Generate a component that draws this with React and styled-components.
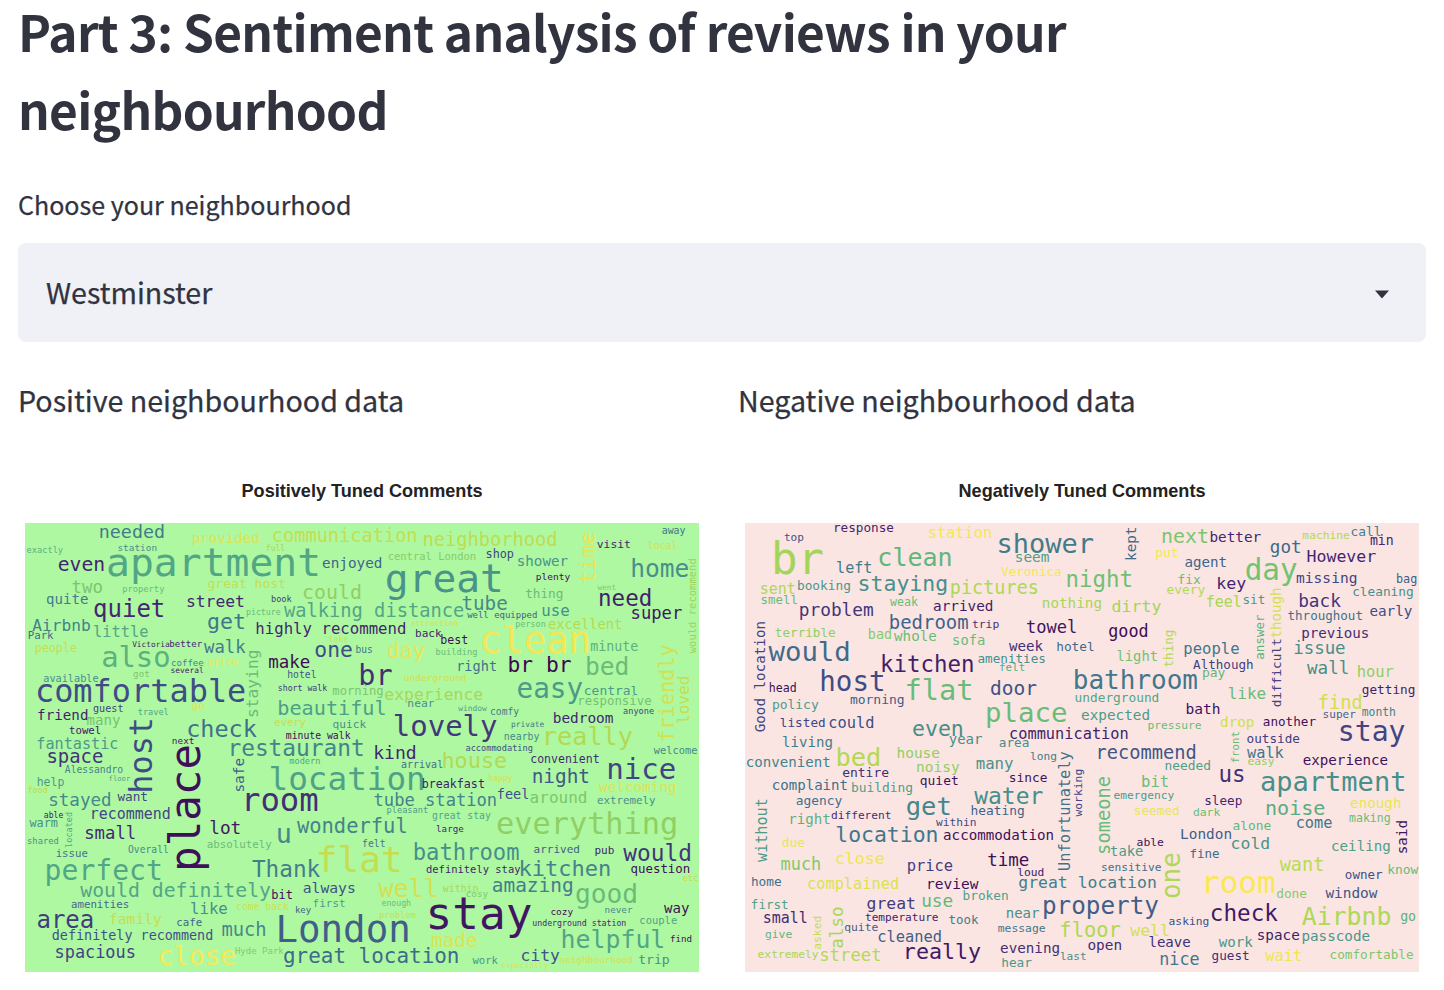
import React from "react";
import styled, { createGlobalStyle } from "styled-components";

const GlobalStyle = createGlobalStyle`
  * { box-sizing: border-box; }
  html, body { margin: 0; padding: 0; background: #ffffff; }
  body {
    font-family: "Noto Sans CJK SC", "Noto Sans", sans-serif;
    color: #31333f;
    overflow: hidden;
  }
`;

const Page = styled.main`
  width: 1444px;
  height: 990px;
  padding: 0 18px;
  overflow: hidden;
  display: flex;
  flex-direction: column;
`;

const Title = styled.h1`
  margin: -8px 0 0;
  font-size: 49.6px;
  font-weight: 700;
  line-height: 77.5px;
  letter-spacing: -0.72px;
`;

const FieldLabel = styled.label`
  margin-top: 36px;
  height: 42px;
  line-height: 42px;
  font-size: 25.05px;
  -webkit-text-stroke: 0.25px currentColor;
`;

const Select = styled.div`
  display: flex;
  align-items: center;
  justify-content: space-between;
  margin-top: 18px;
  height: 99px;
  padding: 0 36px 2px 28px;
  border-radius: 8px;
  background: #f0f1f6;
  font-size: 28.6px;
  line-height: 44px;
  -webkit-text-stroke: 0.25px currentColor;
`;

const Arrow = styled.svg`
  margin-top: 5px;
`;

const Columns = styled.div`
  display: grid;
  grid-template-columns: 688px 688px;
  column-gap: 32px;
  margin-top: 34px;
`;

const Column = styled.section`
  display: flex;
  flex-direction: column;
`;

const ColumnHeading = styled.p`
  margin: 0;
  height: 48px;
  line-height: 48px;
  font-size: 28.65px;
  -webkit-text-stroke: 0.25px currentColor;
`;

const Figure = styled.figure`
  margin: 55px 7px 0;
  display: flex;
  flex-direction: column;
  align-items: center;
`;

const FigureTitle = styled.figcaption`
  height: 24px;
  margin-bottom: 20px;
  font: 700 18.1px/24px "Liberation Sans", Arial, sans-serif;
  color: #222222;
`;

const Cloud = styled.svg`
  display: block;
  width: 674px;
  height: 449px;
  background: ${(p) => p.$background};
`;

const Word = styled.text`
  font-family: "DejaVu Sans Mono", monospace;
  white-space: pre;
`;

const RAMP = [
  "440154", "482475", "414487", "355f8d", "2a788e", "21918c",
  "22a884", "44bf70", "7ad151", "bddf26", "fde725",
].map((h) => [0, 2, 4].map((i) => parseInt(h.slice(i, i + 2), 16)));

const decode = (v) => (v <= 0.04045 ? v / 12.92 : ((v + 0.055) / 1.055) ** 2.4);
const encode = (v) => (v <= 0.0031308 ? v * 12.92 : 1.055 * v ** (1 / 2.4) - 0.055);

// Viridis colour at t (0-10), expressed in display primaries.
function viridis(t) {
  const i = Math.min(9, Math.floor(t));
  const [r, g, b] = RAMP[i].map((c, k) =>
    decode((c + (RAMP[i + 1][k] - c) * (t - i)) / 255)
  );
  const out = [
    0.8225 * r + 0.1774 * g,
    0.0332 * r + 0.9669 * g,
    0.0171 * r + 0.0724 * g + 0.9108 * b,
  ].map((v) => Math.round(encode(v) * 255));
  return `rgb(${out.join(",")})`;
}

// Horizontal word: [text, left, right, baseline, colour]
// Vertical word:   [text, bottom, top, baseline, colour, "v"]
const POSITIVE = [
  { origin: [-15, -15], words: [
    ["needed", 241, 432, 58, 4.2], ["provided", 519, 717, 74, 9.5], ["exactly", 21, 128, 102, 6.5],
    ["station", 294, 410, 97, 5], ["apartment", 266, 897, 172, 6], ["even", 117, 252, 156, 1],
    ["two", 158, 246, 224, 7.5], ["property", 309, 432, 221, 7], ["quite", 81, 203, 257, 4.2],
    ["quiet", 224, 432, 295, 1], ["street", 501, 672, 264, 1], ["great host", 565, 796, 208, 9],
    ["get", 565, 674, 330, 4], ["Airbnb", 38, 210, 337, 4.5], ["Park", 26, 99, 360, 3.5],
    ["little", 222, 383, 354, 6], ["people", 47, 169, 400, 9], ["Victoria", 337, 448, 384, 0.7],
    ["better", 450, 545, 384, 1], ["walk", 553, 674, 404, 4.2], ["also", 249, 447, 444, 6.5],
    ["coffee", 455, 550, 443, 4.5], ["price", 567, 652, 443, 9.8], ["several", 453, 550, 463, 0.5],
    ["got", 341, 388, 475, 7.5], ["available", 72, 234, 490, 5], ["comfortable", 51, 674, 550, 2.3],
    ["go", 517, 553, 572, 9.5], ["guest", 221, 309, 579, 2], ["travel", 355, 445, 588, 6],
    ["friend", 54, 203, 604, 0.8], ["many", 203, 299, 618, 7.3], ["check", 503, 707, 656, 3.8],
    ["towel", 149, 242, 647, 0.5], ["next", 458, 522, 675, 0.5], ["fantastic", 52, 293, 692, 5.5],
  ] },
  { origin: [660, -15], words: [
    ["communication", 84, 515, 71, 9], ["full", 64, 119, 98, 8.5], ["neighborhood", 537, 935, 82, 8.9],
    ["enjoyed", 234, 410, 149, 3.3], ["central London", 430, 692, 125, 7.8], ["great", 427, 770, 220, 5.2],
    ["could", 175, 348, 241, 8], ["book", 80, 139, 250, 2], ["picture", 5, 106, 288, 7],
    ["walking distance", 118, 655, 295, 6], ["tube", 653, 785, 275, 4.7], ["well equipped", 667, 876, 297, 3],
    ["highly recommend", 35, 482, 346, 1], ["attraction", 499, 638, 321, 9.3], ["back", 513, 588, 354, 1],
    ["take", 252, 309, 371, 9.3], ["best", 589, 668, 377, 0.3], ["one", 212, 320, 414, 2.3],
    ["bus", 334, 382, 403, 4], ["day", 430, 537, 417, 9.7], ["building", 574, 696, 410, 7],
    ["make", 74, 193, 447, 0.2], ["right", 637, 754, 458, 3.8], ["hotel", 129, 213, 477, 2.8],
    ["br", 347, 438, 498, 1.3], ["underground", 479, 663, 487, 9.2], ["short walk", 100, 245, 516, 1.5],
    ["morning", 265, 414, 529, 7.5], ["experience", 421, 712, 543, 8.5], ["near", 490, 567, 564, 5],
    ["beautiful", 102, 422, 590, 5.7], ["window", 640, 724, 577, 5.8], ["every", 90, 181, 621, 9],
    ["quick", 265, 362, 628, 5], ["lovely", 449, 753, 651, 1.6], ["minute walk", 125, 315, 660, 0.2],
    ["staying", 597, 397, 38, 7, "v"],
  ] },
  { origin: [1335, -15], words: [
    ["time", 193, 45, 374, 9.7, "v"], ["visit", 381, 481, 88, 1], ["away", 577, 645, 46, 4],
    ["local", 535, 621, 92, 9.3], ["shop", 49, 130, 117, 2], ["shower", 143, 292, 143, 5.2],
    ["home", 487, 654, 174, 5], ["plenty", 200, 299, 183, 0.2], ["thing", 168, 278, 238, 7],
    ["went", 383, 437, 213, 7.7], ["need", 390, 543, 263, 0.8], ["super", 485, 634, 300, 0.5],
    ["use", 218, 297, 292, 5], ["person", 138, 226, 324, 7], ["excellent", 237, 455, 330, 8.7],
    ["clean", 35, 357, 403, 9.9], ["minute", 364, 503, 396, 6.5], ["would recommend", 405, 122, 677, 8.3, "v"],
    ["br br", 118, 301, 461, 0], ["bed", 351, 474, 470, 7], ["easy", 145, 335, 537, 5.5],
    ["central", 344, 503, 528, 5.5], ["responsive", 325, 543, 560, 7.3], ["anyone", 461, 551, 587, 2],
    ["comfy", 62, 146, 588, 4.2], ["bedroom", 252, 428, 612, 1], ["private", 125, 222, 625, 4],
    ["nearby", 104, 207, 663, 4.7], ["really", 222, 485, 680, 8.7], ["friendly", 668, 382, 611, 9.3, "v"],
    ["loved", 615, 475, 655, 9, "v"],
  ] },
  { origin: [-15, 666], words: [
    ["host", 138, -79, 396, 2.3, "v"], ["place", 370, 4, 538, 0.3, "v"], ["space", 83, 247, 53, 1.5],
    ["Alessandro", 135, 308, 83, 4.5], ["help", 53, 131, 122, 5.5], ["floor", 267, 330, 106, 6],
    ["food", 24, 82, 142, 8.8], ["stayed", 88, 272, 182, 4.7], ["want", 293, 382, 165, 2],
    ["able", 73, 129, 217, 0.5], ["recommend", 213, 450, 220, 2], ["warm", 29, 112, 244, 5],
    ["located", 307, 202, 154, 6, "v"], ["small", 196, 346, 281, 1], ["lot", 571, 661, 264, 0.6],
    ["absolutely", 562, 754, 307, 7], ["shared", 23, 115, 296, 5], ["issue", 109, 202, 335, 4],
    ["Overall", 326, 445, 321, 4.8], ["perfect", 81, 424, 403, 6], ["would definitely", 182, 750, 455, 6],
    ["amenities", 155, 326, 488, 3.5], ["area", 54, 219, 548, 1.7], ["family", 270, 423, 536, 9],
    ["like", 513, 621, 506, 5], ["come back", 650, 805, 494, 9.2], ["cafe", 471, 545, 542, 3.3],
    ["definitely recommend", 98, 578, 582, 2.5], ["much", 609, 737, 571, 4.7], ["spacious", 107, 345, 638, 2],
    ["close", 418, 644, 657, 10], ["Hyde Park", 647, 790, 624, 7.8], ["safe", 140, 41, 670, 3, "v"],
    ["room", 671, 891, 197, 1.3],
  ] },
  { origin: [660, 666], words: [
    ["restaurant", -47, 356, 31, 4.5], ["kind", 389, 512, 39, 1], ["modern", 135, 225, 55, 6],
    ["arrival", 470, 593, 68, 3.7], ["house", 595, 783, 67, 8.7], ["location", 77, 537, 132, 5.8],
    ["breakfast", 533, 718, 126, 0.7], ["tube station", 389, 754, 181, 4.5], ["pleasant", 427, 548, 201, 5.5],
    ["great stay", 563, 736, 219, 6], ["wonderful", 157, 485, 262, 4.5], ["large", 575, 655, 259, 1],
    ["u", 99, 136, 292, 4.7], ["felt", 353, 420, 304, 4], ["flat", 219, 467, 379, 9],
    ["bathroom", 509, 820, 342, 5], ["Thank", 22, 222, 395, 4.3], ["definitely stay", 545, 825, 381, 0.8],
    ["always", 176, 330, 441, 2.5], ["well", 402, 577, 454, 9.3], ["within", 594, 699, 439, 8.5],
    ["cosy", 664, 728, 455, 7.6], ["bit", 82, 142, 459, 0.2], ["first", 205, 300, 485, 5.5],
    ["enough", 411, 497, 480, 7], ["key", 152, 197, 501, 3.3], ["problem", 404, 511, 516, 9],
    ["London", 101, 491, 590, 3], ["stay", 550, 855, 550, 0.5], ["made", 563, 695, 603, 9.5],
    ["great location", 118, 640, 651, 3.5],
  ] },
  { origin: [1335, 666], words: [
    ["accommodating", -12, 188, 17, 2.3], ["welcome", 552, 681, 26, 4.7], ["convenient", 183, 387, 52, 1.2],
    ["nice", 416, 614, 99, 2], ["night", 190, 357, 111, 2.8], ["happy", 57, 126, 107, 9.3],
    ["welcoming", 388, 618, 139, 9.5], ["feel", 83, 176, 159, 2.5], ["around", 182, 350, 171, 7.5],
    ["extremely", 383, 555, 174, 5], ["everything", 84, 620, 265, 8], ["arrived", 193, 328, 322, 3],
    ["pub", 376, 431, 326, 1], ["would", 461, 662, 347, 1.5], ["kitchen", 151, 420, 392, 4.5],
    ["question", 484, 659, 382, 0.2], ["etc", 639, 683, 407, 9], ["amazing", 69, 308, 439, 4.3],
    ["good", 320, 500, 473, 7], ["way", 583, 656, 501, 0.3], ["cozy", 243, 308, 507, 0.2],
    ["never", 406, 486, 501, 4.7], ["underground station", 189, 468, 541, 1], ["couple", 510, 620, 536, 6],
    ["helpful", 278, 582, 608, 6], ["find", 602, 665, 590, 0.2], ["city", 155, 267, 647, 2.5],
    ["neighbourhood", 270, 488, 652, 9.3], ["trip", 507, 597, 656, 5], ["especially", 96, 234, 668, 9.5],
    ["work", 8, 82, 656, 5.3],
  ] },
];

const NEGATIVE = [
  { origin: [-15, -15], words: [
    ["response", 282, 460, 41, 1], ["top", 134, 190, 66, 2.5], ["station", 566, 754, 59, 9.9],
    ["shower", 775, 1058, 104, 4.2], ["br", 104, 245, 166, 8.4], ["clean", 417, 634, 142, 6.7],
    ["left", 291, 395, 162, 4.2], ["seem", 827, 926, 129, 5.7], ["Veronica", 784, 963, 172, 9.9],
    ["sent", 62, 165, 226, 8.6], ["booking", 174, 331, 215, 5.3], ["staying", 357, 621, 216, 5],
    ["pictures", 634, 894, 227, 8.6], ["night", 982, 1175, 206, 7.2], ["smell", 64, 172, 256, 7],
    ["weak", 451, 532, 261, 7], ["nothing", 909, 1084, 267, 8.5], ["problem", 181, 398, 293, 1.5],
    ["arrived", 582, 758, 276, 0.7], ["bedroom", 451, 683, 332, 3.2], ["trip", 698, 776, 327, 1.5],
    ["towel", 861, 1009, 342, 0.5], ["terrible", 107, 285, 356, 8], ["bad", 387, 454, 360, 7.8],
    ["whole", 463, 588, 366, 7], ["sofa", 639, 734, 380, 7], ["would", 87, 328, 427, 3.5],
    ["week", 808, 907, 398, 1.3], ["hotel", 952, 1062, 397, 3.5], ["Good location", 640, 311, 74, 2, "v"],
    ["kitchen", 426, 700, 460, 0.8], ["amenities", 715, 916, 433, 5], ["felt", 779, 854, 458, 6.2],
    ["host", 245, 432, 516, 2.3], ["flat", 499, 696, 544, 7], ["door", 754, 888, 528, 2.5],
    ["bathroom", 1005, 1370, 512, 4], ["underground", 1007, 1256, 549, 6], ["head", 89, 168, 521, 0.3],
    ["morning", 333, 492, 557, 3], ["policy", 99, 234, 572, 5.5], ["place", 742, 978, 611, 7],
    ["listed", 122, 255, 624, 2], ["could", 268, 401, 629, 2.3], ["even", 520, 668, 653, 5],
    ["communication", 810, 1164, 661, 0.8], ["year", 627, 725, 676, 5], ["area", 779, 866, 686, 5],
    ["living", 129, 277, 684, 4.3],
  ] },
  { origin: [1005, -15], words: [
    ["kept", 125, 28, 166, 3.5, "v"], ["next", 248, 384, 74, 7.5], ["better", 392, 541, 71, 1],
    ["machine", 670, 808, 62, 8.7], ["call", 814, 902, 53, 4.3], ["got", 573, 662, 103, 3.5],
    ["min", 873, 939, 80, 1], ["put", 229, 293, 115, 9.9], ["However", 684, 886, 129, 1],
    ["agent", 316, 439, 145, 3.2], ["day", 500, 648, 185, 7.3], ["missing", 652, 830, 192, 2],
    ["bag", 951, 1010, 193, 3], ["fix", 295, 360, 197, 7], ["every", 262, 374, 225, 8.7],
    ["key", 413, 496, 210, 1], ["cleaning", 819, 999, 232, 5], ["feel", 380, 483, 266, 8.5],
    ["sit", 490, 554, 256, 5.5], ["back", 659, 780, 265, 1.5], ["though", 359, 211, 602, 9.3, "v"],
    ["difficult", 565, 363, 602, 2, "v"], ["throughout", 625, 847, 304, 3.8], ["early", 871, 995, 292, 2.3],
    ["dirty", 98, 242, 279, 8.4], ["good", 88, 203, 356, 0.2], ["previous", 667, 866, 357, 1.2],
    ["answer", 423, 291, 551, 6.5, "v"], ["thing", 446, 337, 277, 8.7, "v"], ["issue", 643, 794, 406, 5],
    ["people", 314, 476, 407, 4], ["light", 112, 232, 426, 7.3], ["Although", 340, 519, 451, 1.8],
    ["wall", 682, 805, 465, 5], ["hour", 834, 939, 474, 8], ["pay", 369, 434, 475, 6.8],
    ["like", 446, 556, 540, 7], ["getting", 848, 1004, 527, 0.8], ["find", 717, 845, 570, 9.2],
    ["bath", 320, 419, 585, 0.3], ["super", 730, 826, 597, 3.3], ["month", 848, 946, 592, 4.5],
    ["drop", 423, 521, 624, 9.2], ["another", 551, 706, 621, 0.3], ["pressure", 205, 363, 630, 7],
    ["expected", 6, 208, 605, 5.5], ["outside", 502, 658, 674, 1.8], ["stay", 779, 972, 668, 2],
  ] },
  { origin: [-15, 666], words: [
    ["convenient", 20, 270, 64, 4.5], ["bed", 293, 420, 62, 8.7], ["entire", 309, 445, 95, 1.3],
    ["house", 473, 598, 38, 8], ["noisy", 532, 657, 79, 8], ["many", 711, 818, 70, 5.2],
    ["long", 872, 949, 43, 4.3], ["quiet", 542, 654, 119, 0.3], ["since", 809, 920, 108, 0.4],
    ["complaint", 98, 322, 132, 3.8], ["building", 336, 517, 138, 5.7], ["agency", 170, 305, 178, 3.7],
    ["get", 502, 631, 207, 4.6], ["water", 704, 906, 175, 5], ["heating", 695, 852, 209, 3.2],
    ["Unfortunately", 375, 21, 989, 3.8, "v"], ["working", 214, 73, 1024, 2, "v"], ["right", 148, 270, 234, 6.5],
    ["different", 275, 453, 220, 1.2], ["within", 589, 708, 242, 2.3], ["without", 350, 162, 81, 5.5, "v"],
    ["location", 290, 592, 288, 4], ["accommodation", 612, 940, 283, 0.3], ["due", 128, 193, 304, 9.7],
    ["close", 288, 431, 354, 9.8], ["time", 745, 865, 361, 0.3], ["much", 126, 241, 374, 7.7],
    ["price", 504, 637, 376, 1.8], ["loud", 834, 911, 390, 0.7], ["home", 36, 123, 422, 3.8],
    ["complained", 204, 475, 431, 9.4], ["review", 562, 713, 430, 0.3], ["great location", 838, 1248, 427, 4.3],
    ["first", 35, 144, 489, 5.8], ["great", 383, 525, 490, 1.7], ["use", 548, 637, 484, 6.8],
    ["broken", 671, 804, 463, 5.7], ["property", 912, 1253, 506, 3], ["near", 801, 896, 518, 5],
    ["small", 71, 201, 532, 1.2], ["temperature", 377, 594, 527, 0.8], ["took", 628, 713, 536, 4.2],
    ["also", 608, 487, 309, 8.5, "v"], ["asked", 612, 514, 241, 9, "v"], ["quite", 315, 413, 557, 3],
    ["message", 776, 915, 560, 4], ["floor", 962, 1139, 573, 8.6], ["give", 77, 155, 578, 6.7],
    ["cleaned", 415, 604, 590, 3], ["really", 494, 720, 639, 0.6], ["evening", 783, 958, 621, 1.3],
    ["last", 962, 1038, 643, 5], ["hear", 787, 874, 663, 5.5], ["extremely", 55, 234, 636, 8.5],
    ["street", 241, 422, 645, 8.7],
  ] },
  { origin: [1005, 666], words: [
    ["front", 53, -40, 475, 7, "v"], ["recommend", 51, 347, 41, 2.7], ["needed", 257, 391, 74, 5.7],
    ["walk", 502, 609, 37, 4], ["easy", 505, 582, 57, 8], ["experience", 671, 922, 57, 0.4],
    ["us", 421, 493, 110, 1.3], ["apartment", 545, 975, 137, 5], ["bit", 187, 265, 123, 7],
    ["emergency", 103, 281, 160, 5.5], ["sleep", 375, 485, 178, 1], ["seemed", 164, 297, 209, 9.7],
    ["dark", 341, 419, 212, 7], ["noise", 560, 733, 208, 6.3], ["enough", 813, 962, 186, 9.7],
    ["come", 650, 755, 247, 4], ["making", 810, 930, 228, 7], ["said", 325, 227, 981, 0.5, "v"],
    ["someone", 326, 96, 90, 7, "v"], ["London", 304, 454, 279, 3], ["alone", 460, 572, 252, 6.8],
    ["cold", 455, 568, 310, 5.2], ["able", 172, 250, 300, 0.4], ["take", 93, 188, 332, 5.5],
    ["fine", 331, 417, 337, 3.5], ["ceiling", 756, 930, 317, 5.7], ["one", 457, 326, 299, 8.6, "v"],
    ["want", 600, 730, 377, 8.8], ["sensitive", 65, 243, 377, 3.7], ["owner", 797, 906, 401, 2.5],
    ["know", 925, 1013, 384, 7], ["room", 371, 582, 441, 10], ["done", 591, 679, 458, 7.8],
    ["window", 737, 890, 456, 2.7], ["asking", 268, 386, 537, 2.5], ["check", 394, 590, 525, 0.6],
    ["Airbnb", 667, 930, 537, 8.6], ["go", 963, 1006, 525, 6.5], ["well", 152, 267, 571, 9.3],
    ["open", 25, 124, 612, 1.2], ["leave", 208, 330, 605, 1.3], ["space", 533, 657, 583, 0.7],
    ["passcode", 668, 868, 586, 5.3], ["work", 417, 516, 604, 5.3], ["nice", 242, 356, 659, 4],
    ["guest", 397, 507, 644, 1.3], ["wait", 557, 664, 645, 9.8], ["comfortable", 751, 999, 640, 7.5],
  ] },
];

// Empty space before the first glyph's ink, in em.
const bearing = (ch) => (/[bhkmnpruBDEFHKLPR]/.test(ch) ? 0.085 : /[AVTwvyx]/.test(ch) ? 0.02 : 0.065);

function CloudWord({ origin, word }) {
  const [text, start, end, baseline, tone, vertical] = word;
  const lead = bearing(text[0]);
  const size = Math.abs(end - start) / (0.602 * text.length - 0.055 - lead);
  const inset = size * lead;
  const x = origin[0] + (vertical ? baseline + 1 : start - inset);
  const y = origin[1] + (vertical ? start + inset : baseline + 2);
  return (
    <Word
      fontSize={size}
      fill={viridis(tone)}
      transform={`translate(${x} ${y})${vertical ? " rotate(-90)" : ""}`}
    >
      {text}
    </Word>
  );
}

function WordCloud({ title, background, regions }) {
  return (
    <Figure>
      <FigureTitle>{title}</FigureTitle>
      <Cloud $background={background} viewBox="0 0 2022 1347" role="img" aria-label={title}>
        {regions.map((region) =>
          region.words.map((word) => (
            <CloudWord key={region.origin + word[0]} origin={region.origin} word={word} />
          ))
        )}
      </Cloud>
    </Figure>
  );
}

export default function App() {
  return (
    <>
      <GlobalStyle />
      <Page>
        <Title>Part 3: Sentiment analysis of reviews in your neighbourhood</Title>
        <FieldLabel>Choose your neighbourhood</FieldLabel>
        <Select>
          <span>Westminster</span>
          <Arrow width="16" height="9" viewBox="0 0 16 9" aria-hidden="true">
            <path d="M1 0.5h14L8.7 7.8q-.7.7-1.4 0z" fill="#31333f" />
          </Arrow>
        </Select>
        <Columns>
          <Column>
            <ColumnHeading>Positive neighbourhood data</ColumnHeading>
            <WordCloud title="Positively Tuned Comments" background="#aff8a2" regions={POSITIVE} />
          </Column>
          <Column>
            <ColumnHeading>Negative neighbourhood data</ColumnHeading>
            <WordCloud title="Negatively Tuned Comments" background="#fae5e2" regions={NEGATIVE} />
          </Column>
        </Columns>
      </Page>
    </>
  );
}
